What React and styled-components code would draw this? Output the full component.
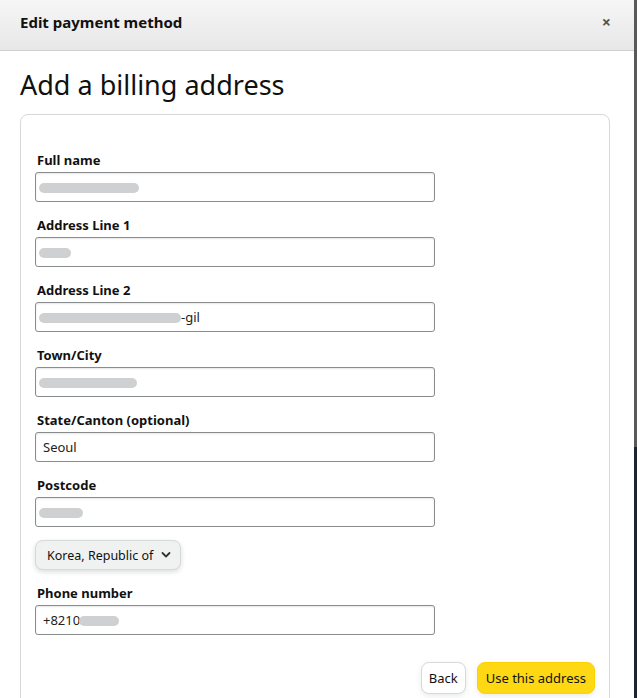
import styled, { createGlobalStyle } from 'styled-components'

const Global = createGlobalStyle`
  html, body {
    margin: 0;
    padding: 0;
    height: 100%;
    overflow: hidden;
  }
  body {
    font-family: "Noto Sans", "Open Sans", Arial, sans-serif;
    color: #0f1111;
    background: #ffffff;
  }
`

const Page = styled.div`
  display: flex;
  flex-direction: row;
  height: 698px;
`

const Modal = styled.div`
  width: 634px;
  height: 698px;
  background: #ffffff;
  display: flex;
  flex-direction: column;
  overflow: hidden;
`

const Edge = styled.div`
  flex: 1;
  background: linear-gradient(#595959 0, #595959 64%, #1c2633 64%, #1c2633 100%);
`

const Header = styled.div`
  flex-shrink: 0;
  height: 51px;
  box-sizing: border-box;
  padding: 0 20px;
  display: flex;
  align-items: center;
  justify-content: space-between;
  background: linear-gradient(#f6f6f6, #e7e7e7);
  border-bottom: 1px solid #d0d0d0;
`

const HeaderTitle = styled.div`
  font-size: 15px;
  font-weight: 700;
  color: #111;
  margin-top: -6px;
`

const Close = styled.div`
  font-size: 16px;
  color: #555;
  margin-top: -6px;
  margin-right: 3px;
  font-weight: 700;
`

const Body = styled.div`
  flex-shrink: 0;
  padding: 17px 24px 0 20px;
`

const Heading = styled.h1`
  margin: 0 0 12px;
  font-size: 27px;
  font-weight: 400;
  line-height: 34px;
  color: #0f1111;
`

const Card = styled.div`
  border: 1px solid #d5d9d9;
  border-radius: 8px;
  padding: 35px 14px 30px 14px;
  min-height: 600px;
`

const Field = styled.div`
  display: flex;
  flex-direction: column;
  margin-bottom: 13px;
`

const Label = styled.div`
  font-size: 13px;
  font-weight: 700;
  line-height: 20px;
  margin: 0 0 2px 2px;
  color: #111;
`

const Input = styled.div`
  width: 400px;
  height: 30px;
  box-sizing: border-box;
  border: 1px solid #888c8c;
  border-radius: 3px;
  box-shadow: inset 0 1px 2px rgba(15, 17, 17, 0.1);
  display: flex;
  align-items: center;
  padding: 0 7px;
  font-size: 13px;
  color: #222;
`

const Smudge = styled.span`
  display: inline-block;
  width: ${p => p.w}px;
  height: 10px;
  border-radius: 6px;
  background: #cfd0d2;
  filter: blur(0.6px);
  margin-left: ${p => p.ml || 0}px;
  margin-top: 2px;
`

const Select = styled.div`
  display: inline-flex;
  align-items: center;
  gap: 8px;
  height: 30px;
  box-sizing: border-box;
  padding: 0 9px 0 11px;
  margin: 0 0 13px;
  align-self: flex-start;
  background: #f0f2f2;
  border: 1px solid #d5d9d9;
  border-radius: 8px;
  box-shadow: 0 2px 5px rgba(15, 17, 17, 0.15);
  font-size: 12.5px;
  color: #0f1111;
`

const Actions = styled.div`
  display: flex;
  justify-content: flex-end;
  gap: 11px;
  margin-top: 27px;
`

const Button = styled.div`
  height: 32px;
  box-sizing: border-box;
  display: flex;
  align-items: center;
  padding: 0 ${p => (p.primary ? 8 : 7)}px;
  border-radius: 8px;
  font-size: 13px;
  color: #0f1111;
  background: ${p => (p.primary ? '#ffd814' : '#ffffff')};
  border: 1px solid ${p => (p.primary ? '#fcd200' : '#d5d9d9')};
  box-shadow: 0 2px 5px rgba(213, 217, 217, 0.5);
`

const Chevron = () => (
  <svg width="10" height="10" viewBox="0 0 10 10">
    <path d="M1.5 3 L5 6.5 L8.5 3" fill="none" stroke="#333" strokeWidth="1.8" strokeLinecap="round" strokeLinejoin="round" />
  </svg>
)

const App = () => {
  return (
    <Page>
      <Global />
      <Modal>
        <Header>
          <HeaderTitle>Edit payment method</HeaderTitle>
          <Close>×</Close>
        </Header>
        <Body>
          <Heading>Add a billing address</Heading>
          <Card>
            <Field>
              <Label>Full name</Label>
              <Input><Smudge w={100} ml={-4} /></Input>
            </Field>
            <Field>
              <Label>Address Line 1</Label>
              <Input><Smudge w={32} ml={-4} /></Input>
            </Field>
            <Field>
              <Label>Address Line 2</Label>
              <Input><Smudge w={142} ml={-4} />-gil</Input>
            </Field>
            <Field>
              <Label>Town/City</Label>
              <Input><Smudge w={98} ml={-4} /></Input>
            </Field>
            <Field>
              <Label>State/Canton (optional)</Label>
              <Input>Seoul</Input>
            </Field>
            <Field>
              <Label>Postcode</Label>
              <Input><Smudge w={44} ml={-4} /></Input>
            </Field>
            <Select>
              Korea, Republic of <Chevron />
            </Select>
            <Field>
              <Label>Phone number</Label>
              <Input>+8210<Smudge w={40} ml={-1} /></Input>
            </Field>
            <Actions>
              <Button>Back</Button>
              <Button primary>Use this address</Button>
            </Actions>
          </Card>
        </Body>
      </Modal>
      <Edge />
    </Page>
  )
}

export default App
